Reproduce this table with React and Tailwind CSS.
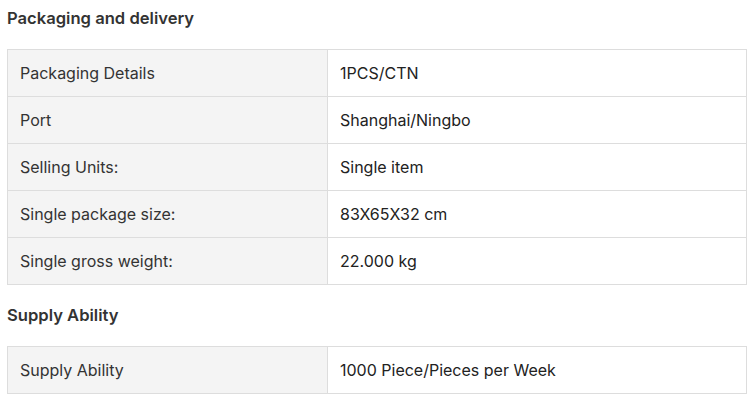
import React from 'react';

const packaging = [
  ['Packaging Details', '1PCS/CTN'],
  ['Port', 'Shanghai/Ningbo'],
  ['Selling Units:', 'Single item'],
  ['Single package size:', '83X65X32 cm'],
  ['Single gross weight:', '22.000 kg'],
];

const supply = [['Supply Ability', '1000 Piece/Pieces per Week']];

function SpecTable({ rows }) {
  return (
    <table className="w-[740px] border-collapse border border-[#dddddd]">
      <tbody>
        {rows.map(([label, value]) => (
          <tr key={label} className="border-b border-[#dddddd]">
            <td className="w-[320px] h-[47px] bg-[#f4f4f4] border-r border-[#dddddd] pl-[12px] text-[#333333]">{label}</td>
            <td className="h-[47px] pl-[12px] text-[#222222]">{value}</td>
          </tr>
        ))}
      </tbody>
    </table>
  );
}

export default function App() {
  return (
    <div className="bg-white w-[756px] h-[404px] px-[7px] text-[16px]" style={{ fontFamily: 'Inter, "Noto Sans", sans-serif' }}>
      <h2 className="text-[16.6px] leading-[24px] font-semibold text-[#333333] pt-[6px] h-[49px]">Packaging and delivery</h2>
      <SpecTable rows={packaging} />
      <h2 className="text-[16.6px] leading-[24px] font-semibold text-[#333333] pt-[18px] h-[61px]">Supply Ability</h2>
      <SpecTable rows={supply} />
    </div>
  );
}
